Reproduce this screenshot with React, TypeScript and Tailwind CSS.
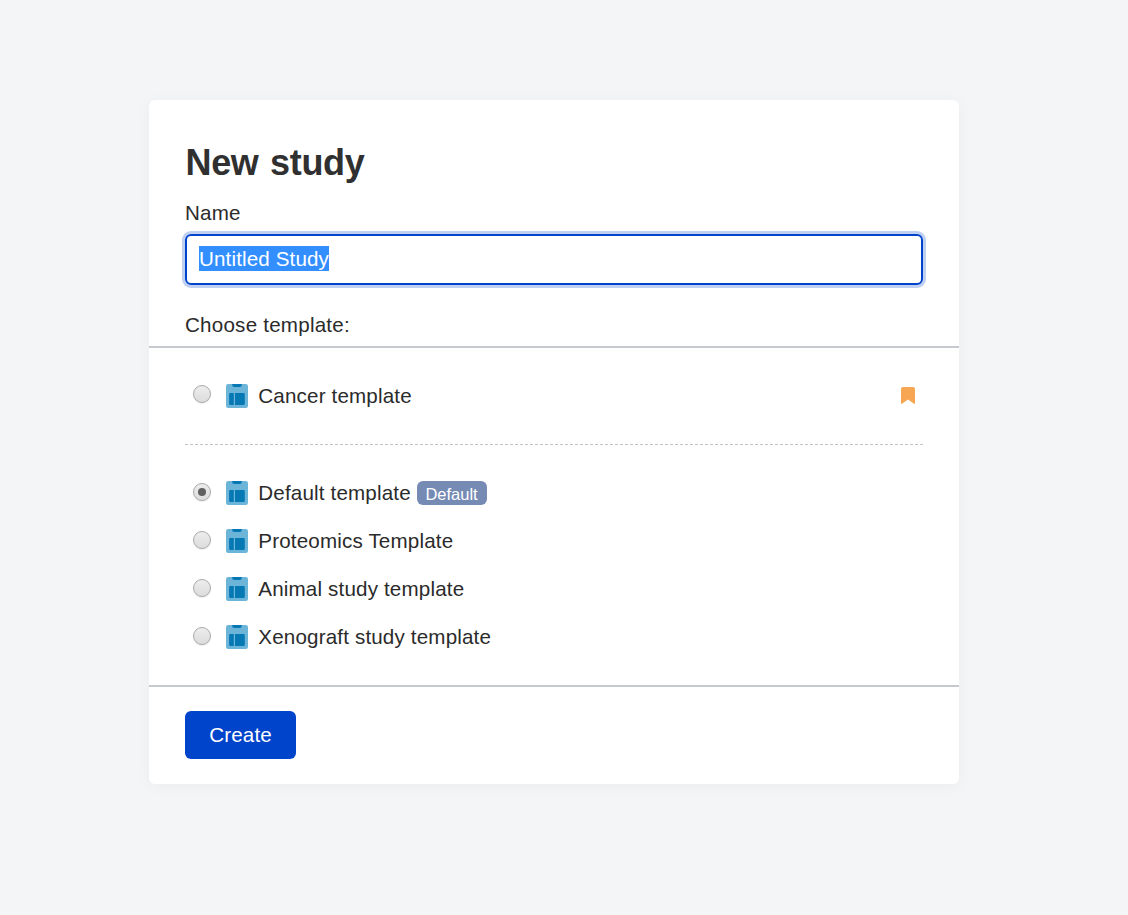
function TemplateIcon() {
  return (
    <svg width="22" height="24" viewBox="0 0 22 24" className="ml-[15px] shrink-0">
      <rect width="22" height="24" rx="2.2" fill="#6cb5d9" />
      <path d="M6.200 0h9.600v1a2 2 0 0 1-2 2H8.200a2 2 0 0 1-2-2z" fill="#0679b5" />
      <path d="M4.300 9H7.800v12H4.300a1.200 1.200 0 0 1-1.200-1.200v-9.600A1.200 1.200 0 0 1 4.300 9z" fill="#0679b5" />
      <path d="M9 9h8.600a1.200 1.200 0 0 1 1.200 1.200v9.600a1.200 1.200 0 0 1-1.200 1.200H9z" fill="#0679b5" />
    </svg>
  );
}

function Radio({ checked, className }: { checked?: boolean; className: string }) {
  return (
    <span
      role="radio"
      aria-checked={!!checked}
      className={`ml-2 flex size-[18px] shrink-0 items-center justify-center rounded-full border border-[#aaaaaa] bg-linear-to-b from-[#ededed] to-[#dcdcdc] shadow-[0_1px_1px_rgba(0,0,0,0.08)] ${className}`}
    >
      {checked && <span className="size-2 rounded-full bg-[#606060]" />}
    </span>
  );
}

type Template = { name: string; isDefault?: boolean; bookmarked?: boolean };

function Row({ name, isDefault, bookmarked }: Template) {
  return (
    <div className="flex h-12 items-center">
      <Radio checked={isDefault} className={bookmarked ? "mb-1" : "mb-0.5"} />
      <TemplateIcon />
      <span className="ml-[10.3px] whitespace-nowrap">{name}</span>
      {isDefault && (
        <span className="ml-[5.7px] flex h-6 w-[70px] items-center justify-center rounded-[6px] bg-[#768bb3] pt-[3px] text-[16.5px] leading-none tracking-[0px] text-white">
          Default
        </span>
      )}
      {bookmarked && (
        <svg width="14" height="17" viewBox="0 0 14 17" className="mr-2 mb-px ml-auto">
          <path d="M2 0h10a2 2 0 0 1 2 2v14q0 1.300-1 .700L7 12.600 1 16.700Q0 17.300 0 16V2a2 2 0 0 1 2-2z" fill="#f7a654" />
        </svg>
      )}
    </div>
  );
}

const templates: Template[] = [
  { name: "Default template", isDefault: true },
  { name: "Proteomics Template" },
  { name: "Animal study template" },
  { name: "Xenograft study template" },
];

export default function App() {
  return (
    <div className="min-h-screen bg-[#f4f5f7] pt-[100px] pl-[149px] font-['Liberation_Sans',Arial,sans-serif] text-[20.6px] leading-6 tracking-[0.16px] text-[#2b2b2b]">
      <main className="h-[684px] w-[810px] rounded-[6px] bg-white shadow-[0_2px_16px_rgba(0,0,0,0.04)]">
        <div className="h-[246px] px-9 pt-10">
          <h1 className="pl-[0.5px] text-[36px] leading-[46px] font-bold tracking-[-0.35px] text-[#303030] [word-spacing:2px]">
            New study
          </h1>
          <div className="mt-[15px]">Name</div>
          <div className="mt-[9px] flex h-[51px] items-start rounded-[6px] border-2 border-[#0044cc] px-3 pt-2.5 shadow-[0_0_0_3px_#bfd0f2]">
            <span className="h-[25px] w-[130px] bg-[#338fff] leading-[25px] tracking-[0.13px] whitespace-nowrap text-white">
              Untitled Study
            </span>
          </div>
          <div className="mt-7 tracking-[0.22px]">Choose template:</div>
        </div>
        <section className="h-[341px] border-y-2 border-[#c6c9d0] px-9">
          <div className="h-[97px] border-b border-dashed border-[#c4c4c4] pt-6">
            <Row name="Cancer template" bookmarked />
          </div>
          <div className="pt-6">
            {templates.map((t) => (
              <Row key={t.name} {...t} />
            ))}
          </div>
        </section>
        <div className="px-9 pt-6">
          <button className="h-12 w-[111px] rounded-[6px] bg-[#0044cc] tracking-[0.15px] text-white">Create</button>
        </div>
      </main>
    </div>
  );
}
